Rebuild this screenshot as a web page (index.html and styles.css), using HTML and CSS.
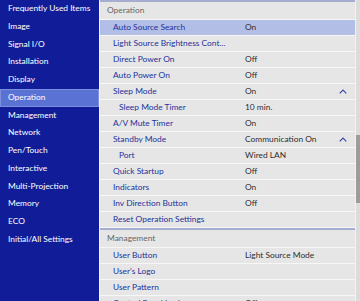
FILE: index.html
```html
<!DOCTYPE html>
<html lang="en">
<head>
    <meta charset="UTF-8">
    <title>Operation</title>
    <link rel="stylesheet" href="styles.css">
</head>
<body>
    <div class="screen">
        <nav class="menu">
            <div class="menu-item">Frequently Used Items</div>
            <div class="menu-item">Image</div>
            <div class="menu-item">Signal I/O</div>
            <div class="menu-item">Installation</div>
            <div class="menu-item">Display</div>
            <div class="menu-item active">Operation</div>
            <div class="menu-item">Management</div>
            <div class="menu-item">Network</div>
            <div class="menu-item">Pen/Touch</div>
            <div class="menu-item">Interactive</div>
            <div class="menu-item">Multi-Projection</div>
            <div class="menu-item">Memory</div>
            <div class="menu-item">ECO</div>
            <div class="menu-item">Initial/All Settings</div>
        </nav>

        <div class="panel">
            <div class="list">
                <!-- Operation -->
                <div class="group">
                    <div class="group-title">Operation</div>
                    <div class="row selected"><span class="label">Auto Source Search</span><span class="value">On</span></div>
                    <div class="row"><span class="label">Light Source Brightness Cont...</span><span class="value"></span></div>
                    <div class="row"><span class="label">Direct Power On</span><span class="value">Off</span></div>
                    <div class="row"><span class="label">Auto Power On</span><span class="value">Off</span></div>
                    <div class="row"><span class="label">Sleep Mode</span><span class="value">On</span><span class="caret"><svg width="8" height="5" viewBox="0 0 8 5"><path d="M0.7 4.3 L4 1 L7.3 4.3" fill="none" stroke="#3a46a0" stroke-width="1.2"/></svg></span></div>
                    <div class="row sub"><span class="label">Sleep Mode Timer</span><span class="value">10 min.</span></div>
                    <div class="row"><span class="label">A/V Mute Timer</span><span class="value">On</span></div>
                    <div class="row"><span class="label">Standby Mode</span><span class="value">Communication On</span><span class="caret"><svg width="8" height="5" viewBox="0 0 8 5"><path d="M0.7 4.3 L4 1 L7.3 4.3" fill="none" stroke="#3a46a0" stroke-width="1.2"/></svg></span></div>
                    <div class="row sub"><span class="label">Port</span><span class="value">Wired LAN</span></div>
                    <div class="row"><span class="label">Quick Startup</span><span class="value">Off</span></div>
                    <div class="row"><span class="label">Indicators</span><span class="value">On</span></div>
                    <div class="row"><span class="label">Inv Direction Button</span><span class="value">Off</span></div>
                    <div class="row"><span class="label">Reset Operation Settings</span><span class="value"></span></div>
                </div>

                <!-- Management -->
                <div class="group">
                    <div class="group-title">Management</div>
                    <div class="row"><span class="label">User Button</span><span class="value">Light Source Mode</span></div>
                    <div class="row"><span class="label">User's Logo</span><span class="value"></span></div>
                    <div class="row"><span class="label">User Pattern</span><span class="value"></span></div>
                    <div class="row"><span class="label">Control Panel Lock</span><span class="value">Off</span></div>
                </div>
            </div>
            <div class="scrollbar"><div class="thumb"></div></div>
        </div>
    </div>
</body>
</html>
```

FILE: styles.css
```css
body {
    margin: 0;
    font-family: 'Lato', 'Liberation Sans', sans-serif;
    font-size: 8.4px;
    background: #e6e6e6;
    overflow: hidden;
}

.screen {
    display: flex;
    width: 360px;
    height: 301px;
    overflow: hidden;
}

/* Menu de la izquierda */
.menu {
    width: 99px;
    flex-shrink: 0;
    background: #111d98;
    border-right: 1px solid #f2f2f2;
}

.menu-item {
    height: 17.75px;
    line-height: 17.75px;
    padding-left: 8px;
    color: #fff;
    white-space: nowrap;
}

.menu-item.active {
    background: #5a72d4;
    box-shadow: inset 0 0 0 1px #7d90e0;
}

/* Panel de ajustes */
.panel {
    flex: 1;
    display: flex;
    background: #e6e6e6;
}

.list {
    flex: 1;
}

.group {
    border-top: 2px solid #a6add0;
}

.group-title {
    height: 17px;
    line-height: 17px;
    padding-left: 7px;
    color: #666;
    border-bottom: 1px solid #f7f7f7;
}

.row {
    display: grid;
    grid-template-columns: 145px 1fr 16px;
    height: 15px;
    line-height: 15px;
    border-bottom: 1px solid #f7f7f7;
}

.row.selected {
    background: #b3bee6;
}

.label {
    padding-left: 13px;
    color: #23329a;
    white-space: nowrap;
}

.row.sub .label {
    padding-left: 19px;
}

.value {
    color: #2e2e2e;
    white-space: nowrap;
}

.caret {
    display: flex;
    align-items: center;
}

.scrollbar {
    width: 4px;
    flex-shrink: 0;
    background: #dcdcdc;
    border-left: 1px solid #f2f2f2;
}

.thumb {
    margin-top: 135px;
    height: 68px;
    background: #9c9c9c;
}
```
